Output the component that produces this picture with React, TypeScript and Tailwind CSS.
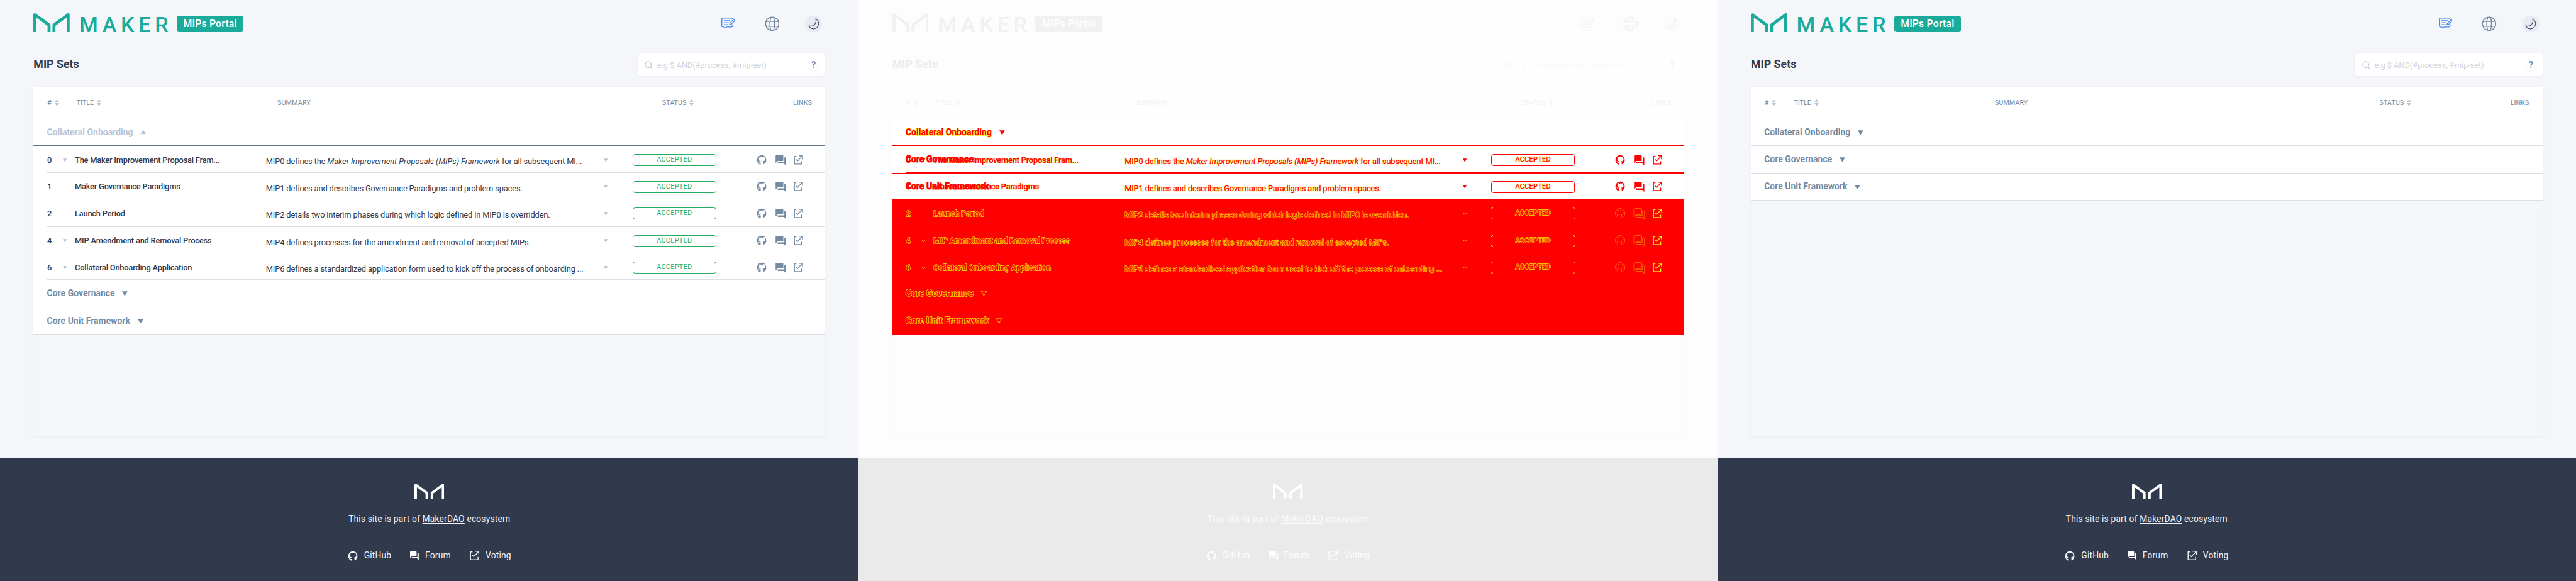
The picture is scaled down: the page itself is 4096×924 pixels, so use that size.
import type { ReactNode } from "react";

type Mode = "open" | "diff" | "closed";

const themes: Record<Mode, string> = {
  open: "bg-[#f5f6fa] [--brand:#1aab9b] [--badgeink:#ffffff] [--head:#31394d] [--muted:#748aa1] [--soft:#b6c4d5] [--hint:#d0d3db] [--edit:#3a86f5] [--moonbg:#e8ebf3] [--moon:#4c5672] [--foot:#31394d] [--footink:#eef3fa] [--logo:#ffffff] [--shadow:#e9ebf1] [--card:#ffffff]",
  closed: "bg-[#f5f6fa] [--brand:#1aab9b] [--badgeink:#ffffff] [--head:#31394d] [--muted:#748aa1] [--soft:#b6c4d5] [--hint:#d0d3db] [--edit:#3a86f5] [--moonbg:#e8ebf3] [--moon:#4c5672] [--foot:#31394d] [--footink:#eef3fa] [--logo:#ffffff] [--shadow:#e9ebf1] [--card:#ffffff]",
  diff: "bg-[#fdfdfd] [--brand:#f1f1f1] [--badgeink:#ffffff] [--head:#ebebeb] [--muted:#f1f1f1] [--soft:#f4f4f4] [--hint:#fafafa] [--edit:#f3f3f3] [--moonbg:#fcfcfc] [--moon:#efefef] [--foot:#eaeaea] [--footink:#fdfdfd] [--logo:#ffffff] [--shadow:#fbfbfb] [--card:#fefefe]",
};

const GithubIcon = ({ className }: { className: string }) => (
  <svg viewBox="0 0 24 24" className={className} fill="currentColor">
    <path d="M12 1C5.9 1 1 5.9 1 12c0 4.9 3.1 9 7.5 10.4.6.1.8-.2.8-.5v-3.4c-.6.2-3.5.7-4.1-1.6 0 0-.5-1.2-1.2-1.6 0 0-1-.7.1-.7 0 0 1.100.1 1.700 1.100 1 1.700 2.600 1.200 3.200.9.1-.7.400-1.200.7-1.500-2.400-.3-4.300-1-4.300-5.100 0-1.200.3-1.900 1.100-2.700-.1-.3-.5-1.400.1-2.900.9-.3 3 1.200 3 1.200a10 10 0 0 1 5.400 0s2.100-1.500 3-1.200c.6 1.500.2 2.600.1 2.900.7.8 1.200 1.600 1.200 2.700 0 4.100-2.500 4.800-4.900 5.100.4.300.7 1 .7 2v4.200c0 .3.2.600.8.5A11 11 0 0 0 12 1z" />
  </svg>
);

const ForumIcon = ({ className }: { className: string }) => (
  <svg viewBox="2 2 20 20" className={className} fill="currentColor">
    <path d="M21 6h-2v9H6v2c0 .55.45 1 1 1h11l4 4V7c0-.55-.45-1-1-1zm-4 6V3c0-.55-.45-1-1-1H3c-.55 0-1 .45-1 1v14l4-4h10c.55 0 1-.45 1-1z" />
  </svg>
);

const VoteIcon = ({ className }: { className: string }) => (
  <svg viewBox="0 0 15 15" className={className} fill="none" stroke="currentColor" strokeWidth="1.4">
    <path d="M4.300 1.700H1.200V14H12.800V9.600M8.300.8H14.200V6.700M14 1 6.300 9.100 3.800 6.700" />
  </svg>
);

const EditIcon = () => (
  <svg viewBox="0 0 22 18" className="h-[18px] w-[22px]" fill="none" stroke="currentColor" strokeWidth="1.3" strokeLinecap="round" strokeLinejoin="round">
    <path d="M17.600 1.400C17.300.9 17 .8 16.400.8H2.600C1.300.8.7 1.400.7 2.600v10.600c0 1.200.6 1.800 1.700 1.800h2l1.800 2 1.900-2h8.200c1.200 0 1.800-.7 1.800-1.800v-1.800" />
    <path d="M4.300 5h9.400M4.300 8.200h7.200M4.300 11.300h6" />
    <path d="m13 11.600.7-2.600 5.300-5.300a1.300 1.300 0 0 1 1.900 1.900l-5.300 5.200z" />
  </svg>
);

const GlobeIcon = () => (
  <svg viewBox="0 0 24 24" className="h-6 w-6" fill="none" stroke="currentColor" strokeWidth="1.500">
    <circle cx="12" cy="12" r="10.700" />
    <path d="M2.100 8.100h19.800M2.100 15.900h19.800M9.900 1.400C7.600 7.500 7.600 16.500 9.900 22.600M14.100 1.400c2.300 6.100 2.300 15.100 0 21.200" />
  </svg>
);

const MoonIcon = () => (
  <svg viewBox="0 0 18 18" className="h-[18px] w-[18px]" fill="none" stroke="currentColor" strokeWidth="1.200" strokeLinejoin="round">
    <path d="M12.100 1.200A8.300 8.300 0 1 1 1.100 12.300c3 .9 6.500.4 8.800-1.700 2.500-2.300 3.200-6.400 2.200-9.400z" />
  </svg>
);

const MakerMark = () => (
  <svg viewBox="0 0 58.500 31" className="h-[31px] w-[58.5px]" fill="none" stroke="currentColor" strokeWidth="4.800" strokeLinejoin="round">
    <path d="M2.400 31V2.400L25.300 19V31M33.200 31V19L56.100 2.400V31" />
  </svg>
);

const FooterMark = () => (
  <svg viewBox="0 0 48 25" className="h-[25px] w-[48px] text-[var(--logo)]" fill="none" stroke="currentColor" strokeWidth="4" strokeLinejoin="round">
    <path d="M2 25V2.200L19.900 15V25M28.200 25V15L46 2.200V25" />
  </svg>
);

const SortIcon = () => (
  <svg viewBox="0 0 7 11" className="h-[11px] w-[7px] text-[var(--soft)]" fill="currentColor">
    <path d="M3.500 0 7 4.900H0zM3.500 11 7 6.100H0z" />
  </svg>
);

const Down = ({ className }: { className: string }) => (
  <svg viewBox="0 0 10 8" className={className} fill="currentColor">
    <path d="M0 0h10L5.900 7.200q-.9 1.200-1.800 0z" />
  </svg>
);

const Up = ({ className }: { className: string }) => (
  <svg viewBox="0 0 10 7" className={className} fill="currentColor">
    <path d="M0 7h10L5.900.7q-.9-1.200-1.800 0z" />
  </svg>
);

const Chevron = () => (
  <svg viewBox="0 0 7 6" className="h-[6px] w-[7px]" fill="none" stroke="#f5e600">
    <path d="M.5 1 3.500 4.500 6.500 1" />
  </svg>
);

function Header() {
  return (
    <>
      <div className="flex h-[52px] items-end text-[var(--brand)]">
        <MakerMark />
        <span className="ml-[15px] w-[157px] text-[34.5px] leading-[23.6px] font-medium tracking-[6.8px] whitespace-nowrap">MAKER</span>
        <span className="flex h-[27px] w-[107.5px] items-center justify-center rounded bg-[var(--brand)] text-[16px] font-medium tracking-[0.2px] whitespace-nowrap text-[var(--badgeink)]">MIPs Portal</span>
        <div className="relative ml-auto h-[27px] w-[167px]">
          <div className="absolute top-[3px] left-0 text-[var(--edit)]"><EditIcon /></div>
          <div className="absolute top-[1.5px] left-[69.5px] text-[var(--muted)]"><GlobeIcon /></div>
          <div className="absolute top-0 left-[135px] flex h-[27px] w-[27px] items-center justify-center rounded-full bg-[var(--moonbg)] text-[var(--moon)]"><MoonIcon /></div>
        </div>
      </div>
      <div className="mt-[34px] flex h-[54px] items-start justify-between">
        <h1 className="mt-[6px] text-[18px] leading-[24px] font-bold text-[var(--head)]">MIP Sets</h1>
        <div className="flex h-[36px] w-[302px] items-center rounded-[5px] bg-[var(--card)] pt-px pl-[12px] shadow-[0_1px_3px_var(--shadow)]">
          <svg viewBox="0 0 13 13" className="h-[13px] w-[13px] text-[var(--soft)]" fill="none" stroke="currentColor" strokeWidth="1.200">
            <circle cx="5.700" cy="5.700" r="4.900" />
            <path d="m9.200 9.200 3.200 3.200" />
          </svg>
          <span className="ml-[6.5px] text-[13px] tracking-[-0.05px] whitespace-nowrap text-[var(--hint)]">e.g $ AND(#process, #mip-set)</span>
          <span className="mr-[10px] ml-auto flex h-[17px] w-[17px] items-center justify-center rounded-full text-[14px] font-bold text-[var(--muted)] shadow-[0_1px_3px_var(--shadow)]">?</span>
        </div>
      </div>
    </>
  );
}

function TableHead() {
  return (
    <div className="flex h-[51px] items-center bg-[var(--card)] pt-[0.5px] pl-[22px] text-[11px] text-[var(--muted)]">
      <span className="flex w-[47px] items-center gap-[5px]"># <SortIcon /></span>
      <span className="flex w-[323.5px] items-center gap-[5px]">TITLE <SortIcon /></span>
      <span className="w-[619px]">SUMMARY</span>
      <span className="flex w-[211px] items-center gap-[5px]">STATUS <SortIcon /></span>
      <span>LINKS</span>
    </div>
  );
}

function GroupRow({ name, variant }: { name: string; variant: "normal" | "open" | "diff" | "overlay" | "block" }) {
  const look = {
    normal: "border-[#dcdee1] bg-white text-[#748aa1]",
    open: "border-[#66778f] bg-white text-[#b6c4d5]",
    diff: "border-[#ff0000] bg-white text-[#ff0000] [-webkit-text-stroke:1.5px_#ffe600] [paint-order:stroke_fill]",
    overlay: "border-[#ff0000] text-[#ff0000] [-webkit-text-stroke:1px_#ff2000] [paint-order:stroke_fill]",
    block: "border-[#ff0000] bg-[#ff0000] text-[#ff0000] [-webkit-text-stroke:1.6px_#f5e600] [paint-order:stroke_fill]",
  }[variant];
  return (
    <div className={`flex h-[44px] items-center border-b pl-[21.5px] text-[14px] font-bold ${look}`}>
      <span className="tracking-[0.08px]">{name}</span>
      {variant === "open" ? (
        <Up className="ml-[12px] h-[6.500px] w-[9.5px]" />
      ) : variant === "block" ? (
        <svg viewBox="-1 -1 12 10" className="ml-[11px] h-[9px] w-[11px]" fill="none" stroke="#f5e600"><path d="M0 0h10L5 8z" /></svg>
      ) : (
        variant !== "overlay" && <Down className="mt-[1px] ml-[12px] h-[7.500px] w-[9px]" />
      )}
    </div>
  );
}

interface Mip {
  id: string;
  title: string;
  summary: ReactNode;
  nested: boolean;
  tall?: boolean;
}

const mips: Mip[] = [
  { id: "0", title: "The Maker Improvement Proposal Fram...", nested: true, summary: <>MIP0 defines the <i className="tracking-[-0.02px]">Maker Improvement Proposals (MIPs) Framework</i> for all subsequent MI...</> },
  { id: "1", title: "Maker Governance Paradigms", nested: false, summary: "MIP1 defines and describes Governance Paradigms and problem spaces." },
  { id: "2", title: "Launch Period", nested: false, tall: true, summary: "MIP2 details two interim phases during which logic defined in MIP0 is overridden." },
  { id: "4", title: "MIP Amendment and Removal Process", nested: true, summary: "MIP4 defines processes for the amendment and removal of accepted MIPs." },
  { id: "6", title: "Collateral Onboarding Application", nested: true, summary: "MIP6 defines a standardized application form used to kick off the process of onboarding ..." },
];

const rowLooks = {
  normal: "bg-white [--ink:#31394d] [--tri:#b6c4d5] [--ok:#27ae60] [--icon:#748aa1] [--line:#dcdee1]",
  diff: "bg-white [--ink:#ff0000] [--tri:#ff0000] [--ok:#ff0000] [--icon:#ff0000] [--line:#ff0000] [-webkit-text-stroke:0.7px_#ffb000] [paint-order:stroke_fill]",
  block: "bg-[#ff0000] [--ink:#ff0000] [--tri:#f5e600] [--ok:#ff0000] [--icon:#ff0000] [--line:#ff0000] [-webkit-text-stroke:1.300px_#f5e600] [paint-order:stroke_fill] [&_.icons_path]:stroke-[#f5e600]",
};

function MipRow({ mip, look }: { mip: Mip; look: "normal" | "diff" | "block" }) {
  const block = look === "block";
  const arrow = block ? <Chevron /> : <Down className="h-[5.500px] w-[6.500px]" />;
  return (
    <div className={`flex pl-[22px] ${mip.tall ? "h-[44px]" : "h-[43px]"} ${rowLooks[look]}`}>
      <div className="flex w-full border-b border-[var(--line)] text-[13px] leading-[18px] text-[var(--ink)]">
        <span className="mt-[14px] w-[25px] font-medium">{mip.id}</span>
        <span className="mt-[20px] w-[19.5px] text-[var(--tri)]">{mip.nested && arrow}</span>
        <span className="mt-[14px] w-[307.5px] font-medium tracking-[-0.2px] whitespace-nowrap">{mip.title}</span>
        <span className="mt-[16.5px] w-[544px] tracking-[-0.13px] whitespace-nowrap">{mip.summary}</span>
        <span className="mt-[20px] w-[46px] text-[var(--tri)]">{arrow}</span>
        <span className="relative mt-[13.5px] flex h-[19px] w-[135px] items-center justify-center rounded-[4px] border border-[var(--ok)] text-[11px] leading-none tracking-[0.3px] text-[var(--ok)]">
          ACCEPTED
          {block && (
            <>
              <i className="absolute -top-px -left-px h-[3px] w-[3px] rounded-tl-[3px] border-t border-l border-[#f5e600]" />
              <i className="absolute -top-px -right-px h-[3px] w-[3px] rounded-tr-[3px] border-t border-r border-[#f5e600]" />
              <i className="absolute -bottom-px -left-px h-[3px] w-[3px] rounded-bl-[3px] border-b border-l border-[#f5e600]" />
              <i className="absolute -right-px -bottom-px h-[3px] w-[3px] rounded-br-[3px] border-r border-b border-[#f5e600]" />
            </>
          )}
        </span>
        <span className="icons mt-[14px] ml-[64.5px] flex items-start text-[var(--icon)]">
          <GithubIcon className="h-[17px] w-[17px]" />
          <ForumIcon className="mt-[1px] ml-[13.500px] h-[16.500px] w-[17px] overflow-visible" />
          <VoteIcon className="mt-[1px] ml-[13px] h-[15px] w-[15px]" />
        </span>
      </div>
    </div>
  );
}

function Footer() {
  return (
    <footer className="mt-auto flex h-[197px] flex-col items-center bg-[var(--foot)] pt-[40px] text-[14px] leading-[20px] tracking-[0.17px] text-[var(--footink)]">
      <FooterMark />
      <p className="mt-[22.5px] whitespace-nowrap">This site is part of <span className="underline underline-offset-2">MakerDAO</span> ecosystem</p>
      <div className="mt-[39px] flex items-center">
        <GithubIcon className="mr-[9.500px] h-[17px] w-[17px]" />GitHub
        <ForumIcon className="mr-[10px] ml-[30.5px] h-[14px] w-[14px] text-[var(--logo)]" />Forum
        <VoteIcon className="mr-[10px] ml-[30.5px] h-[15.500px] w-[15.500px]" />Voting
      </div>
    </footer>
  );
}

function Panel({ mode }: { mode: Mode }) {
  const open = mode === "open";
  return (
    <section className={`flex h-[935.3px] w-[1382px] flex-col ${themes[mode]}`}>
      <div className="px-[54px]">
        <Header />
        <div className="relative h-[562px] shadow-[0_1px_4px_var(--shadow)]">
          <TableHead />
          {mode === "closed" ? (
            <>
              <GroupRow name="Collateral Onboarding" variant="normal" />
              <GroupRow name="Core Governance" variant="normal" />
              <GroupRow name="Core Unit Framework" variant="normal" />
            </>
          ) : (
            <>
              <GroupRow name="Collateral Onboarding" variant={open ? "open" : "diff"} />
              {mips.map((mip, i) => (
                <MipRow key={mip.id} mip={mip} look={open ? "normal" : i < 2 ? "diff" : "block"} />
              ))}
              <GroupRow name="Core Governance" variant={open ? "normal" : "block"} />
              <GroupRow name="Core Unit Framework" variant={open ? "normal" : "block"} />
            </>
          )}
          {mode === "diff" && (
            <div className="absolute inset-x-0 top-[95px]">
              <GroupRow name="Core Governance" variant="overlay" />
              <div className="h-[43px] overflow-hidden"><GroupRow name="Core Unit Framework" variant="overlay" /></div>
            </div>
          )}
        </div>
      </div>
      <Footer />
    </section>
  );
}

export default function App() {
  return (
    <main className="h-[924px] w-[4096px] overflow-hidden bg-[#f5f6fa] font-['Roboto',sans-serif]">
      <div className="flex w-[4146px] [zoom:0.98794]">
        <Panel mode="open" />
        <Panel mode="diff" />
        <Panel mode="closed" />
      </div>
    </main>
  );
}
